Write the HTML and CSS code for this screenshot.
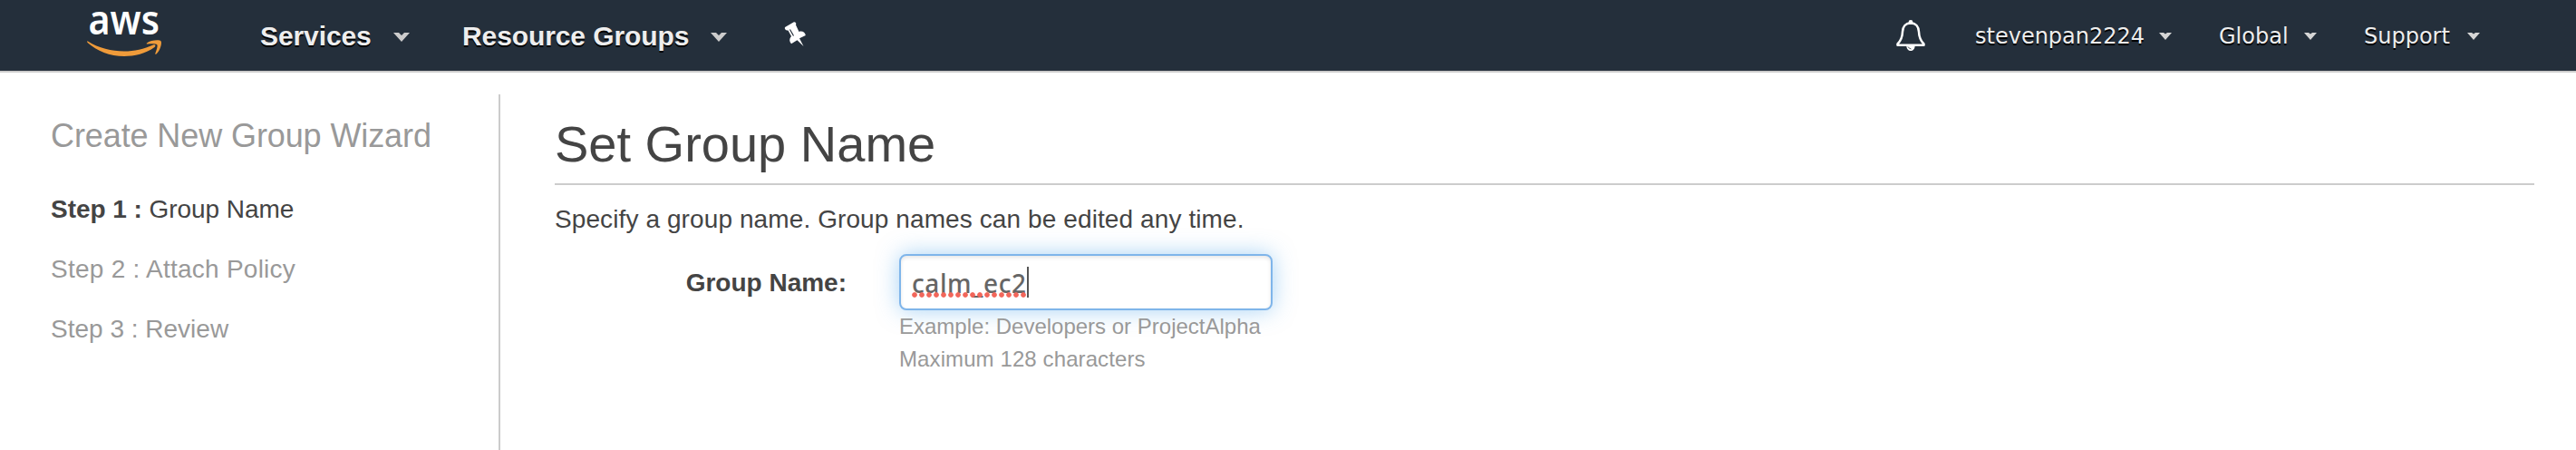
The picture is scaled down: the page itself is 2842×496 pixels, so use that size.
FILE: index.html
```
<!DOCTYPE html>
<html lang="en">
<head>
<meta charset="utf-8">
<title>Create New Group Wizard</title>
<link rel="stylesheet" href="styles.css">
</head>
<body>
<header class="nav">
  <svg class="logo" width="84" height="56" viewBox="0 0 84 56" role="img" aria-label="aws">
    <text class="logo-text" x="1.500" y="30" textLength="78.500" lengthAdjust="spacingAndGlyphs">aws</text>
    <path fill="#ef9b3a" d="M1 37.500C13 45 27 48.500 41 48.500C52 48.500 63 46 73 41.500C75 40.500 76.500 42.500 74.500 44C65 51 52 54 41 54C25 54 11 48 .6 39C-.2 38 .2 37 1 37.500Z"/>
    <path fill="#ef9b3a" d="M66 39.500C70 36.200 80 35.500 81.600 37.400C83 39.500 80.500 48 76.500 51.500C75.600 52.200 75 51.700 75.300 50.800C76.500 47.800 78.300 42.500 77.300 41.200C76.200 40 70.500 40.300 67 40.500C65.700 40.600 65.200 40.100 66 39.500Z"/>
  </svg>
  <nav class="menu">
    <a class="item services">Services
      <svg class="chev" width="18" height="10" viewBox="0 0 18 10"><path fill="#ccc" d="M0 0H6L9 3L12 0H18L9 10Z"/></svg></a>
    <a class="item">Resource Groups
      <svg class="chev" width="18" height="10" viewBox="0 0 18 10"><path fill="#ccc" d="M0 0H6L9 3L12 0H18L9 10Z"/></svg></a>
    <svg class="pin" width="24" height="28" viewBox="0 0 24 28">
      <path fill="#fff" d="M1 6L10.500 .4C12.500 0 14 1.500 13 3.500L16.500 11C20 9.500 23.500 12 23.800 15L17 18.300L21.500 27L14.500 20.200L8 24.300C5.600 21.800 5.600 18.500 8 16L4.500 9.500C2.500 9.800 .2 8.500 1 6Z"/>
      <path stroke="#242f3b" stroke-width="1.200" d="M6.500 8.500L10.500 15.500"/>
    </svg>
  </nav>
  <div class="account">
    <svg class="bell" width="32" height="34" viewBox="0 0 32 34">
      <circle cx="16" cy="2.500" r="2.400" fill="#fff"/>
      <path fill="none" stroke="#fff" stroke-width="2.500" stroke-linejoin="round" d="M16 3.400C10 3.400 7.200 8 7 13C6.800 19.500 5.500 22.500 1.500 26.500V27.700H30.500V26.500C26.500 22.500 25.200 19.500 25 13C24.800 8 22 3.400 16 3.400Z"/>
      <path fill="#fff" d="M11.300 28H20.700C20.700 36 11.300 36 11.300 28Z"/>
      <path fill="none" stroke="#242f3b" stroke-width=".8" d="M13 29.500Q14 31.500 16.500 32"/>
    </svg>
    <a class="link user">stevenpan2224
      <svg class="caret" width="14" height="8" viewBox="0 0 14 8"><path fill="#d6d6d6" d="M0 0H5L7 1.500L9 0H14L7 8Z"/></svg></a>
    <a class="link region">Global
      <svg class="caret" width="14" height="8" viewBox="0 0 14 8"><path fill="#d6d6d6" d="M0 0H5L7 1.500L9 0H14L7 8Z"/></svg></a>
    <a class="link">Support
      <svg class="caret" width="14" height="8" viewBox="0 0 14 8"><path fill="#d6d6d6" d="M0 0H5L7 1.500L9 0H14L7 8Z"/></svg></a>
  </div>
</header>
<div class="wizard">
  <aside class="steps">
    <h2 class="steps-title">Create New Group Wizard</h2>
    <div class="step active"><b>Step 1 :</b> Group Name</div>
    <div class="step policy">Step 2 : Attach Policy</div>
    <div class="step">Step 3 : Review</div>
  </aside>
  <main class="content">
    <h1 class="title">Set Group Name</h1>
    <p class="intro">Specify a group name. Group names can be edited any time.</p>
    <div class="field">
      <div class="label">Group Name:</div>
      <div class="control">
        <div class="input"><span class="value">calm_ec2<i class="spelling"></i></span><i class="cursor"></i></div>
        <div class="hint">Example: Developers or ProjectAlpha</div>
        <div class="hint limit">Maximum 128 characters</div>
      </div>
    </div>
  </main>
</div>
</body>
</html>
```
FILE: styles.css
```
* { box-sizing: border-box; }
body {
  margin: 0;
  height: 496px;
  overflow: hidden;
  background: #fff;
  color: #444;
  font-family: "Liberation Sans", Arial, sans-serif;
  display: flex;
  flex-direction: column;
}
.nav {
  height: 80px;
  flex: none;
  display: flex;
  align-items: flex-start;
  padding: 8px 106px 0 96px;
  background: #242f3b;
  border-bottom: 2px solid #ccc;
}
.logo { flex: none; overflow: visible; }
.logo-text { font: 600 45px "Noto Sans", sans-serif; fill: #fff; }
.menu { display: flex; align-items: flex-start; padding-left: 107px; }
.item {
  display: flex;
  align-items: center;
  justify-content: space-between;
  width: 292px;
  height: 64px;
  color: #eee;
  font-size: 30px;
  font-weight: bold;
  letter-spacing: -.1px;
  line-height: 64px;
  text-shadow: 0 2px 0 #000;
}
.services { width: 165px; margin-right: 58px; }
.chev { margin-top: 2px; }
.pin { margin: 16px 0 0 63px; }
.account { margin-left: auto; display: flex; align-items: flex-start; }
.bell { margin: 14px 55px 0 0; }
.link {
  display: flex;
  align-items: center;
  justify-content: space-between;
  width: 128px;
  height: 64px;
  color: #eee;
  font: 24px/64px "DejaVu Sans", Verdana, sans-serif;
  text-shadow: 0 2px 0 #000;
}
.user { width: 217px; margin-right: 52px; }
.region { width: 108px; margin-right: 52px; }
.wizard { display: flex; flex: 1; padding: 24px 46px 0 56px; }
.steps {
  width: 496px;
  flex: none;
  padding-top: 24px;
  border-right: 2px solid #ccc;
  color: #999;
}
.steps-title {
  margin: 0 0 26px;
  font-size: 36px;
  font-weight: normal;
  letter-spacing: -.1px;
  line-height: 44px;
}
.step { font-size: 28px; line-height: 66px; }
.active { color: #444; letter-spacing: -.05px; }
.policy { letter-spacing: .25px; }
.content { flex: 1; margin-left: 60px; padding-top: 20px; }
.title {
  margin: 0;
  padding-bottom: 8px;
  border-bottom: 2px solid #ccc;
  font-size: 56px;
  font-weight: normal;
  line-height: 70px;
}
.intro { margin: 18px 0; font-size: 28px; letter-spacing: .1px; line-height: 40px; }
.field { display: flex; }
.label {
  width: 322px;
  margin-right: 58px;
  padding-top: 1px;
  text-align: right;
  font-size: 28px;
  font-weight: bold;
  line-height: 62px;
}
.input {
  display: flex;
  width: 412px;
  height: 62px;
  padding: 0 12px;
  border: 2px solid #7fb5ea;
  border-radius: 8px;
  background: #fff;
  box-shadow: 0 0 24px rgba(82, 168, 236, .5), inset 0 2px 4px rgba(0, 0, 0, .1);
}
.value {
  position: relative;
  color: #666;
  font: 500 28px/60px "Noto Sans", "Open Sans", sans-serif;
  letter-spacing: .6px;
}
.spelling {
  position: absolute;
  left: 0;
  top: 40px;
  width: 126px;
  height: 6px;
  background: radial-gradient(circle at 3px 3px, #f2665a 2.4px, rgba(242, 102, 90, 0) 3.2px) 0 0 / 8px 6px;
}
.cursor { width: 2px; height: 34px; margin-top: 12px; background: #555; }
.hint { color: #999; font-size: 24px; line-height: 36px; }
.limit { letter-spacing: .1px; }
```
